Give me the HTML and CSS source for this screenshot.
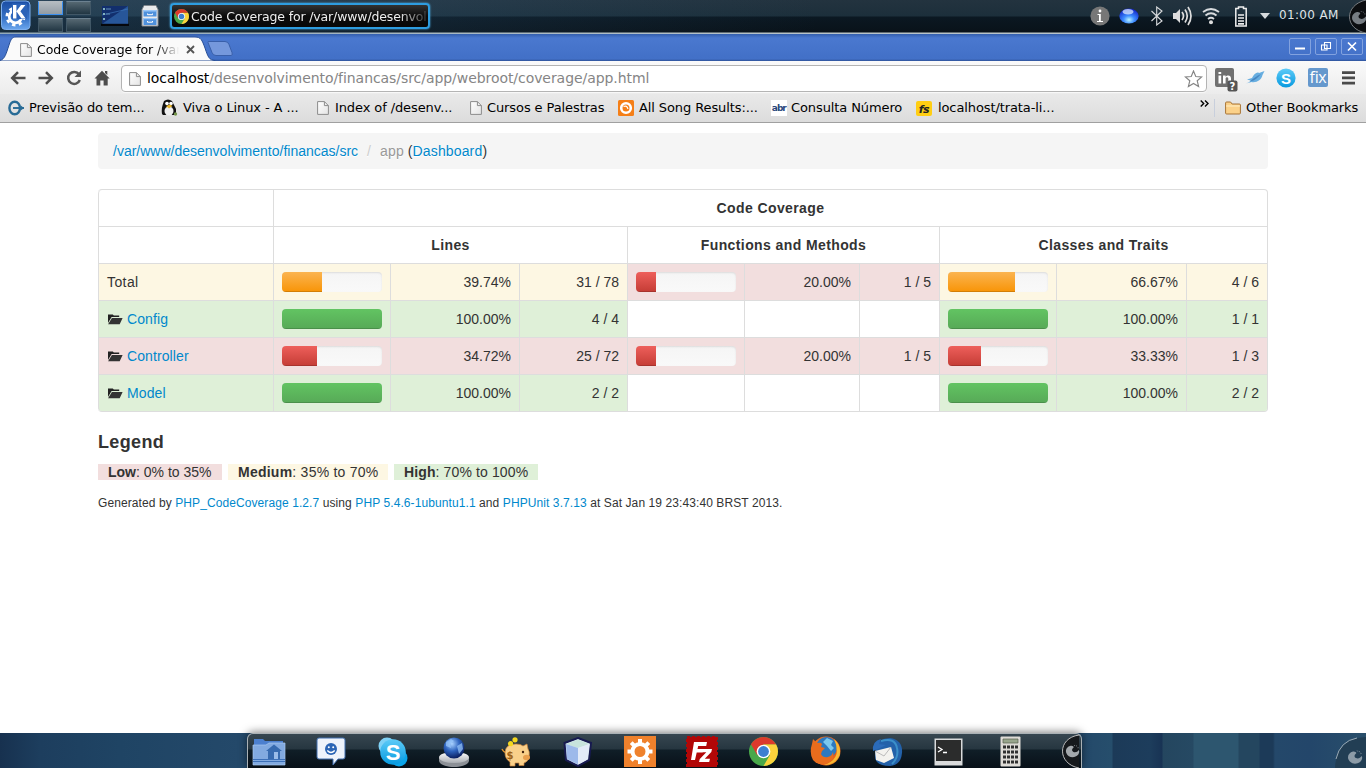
FILE: index.html
```html
<!DOCTYPE html>
<html lang="en">
<head>
<meta charset="utf-8">
<title>Code Coverage for /var/www/desenvolvimento/financas/src/app</title>
<link rel="stylesheet" href="styles.css">
</head>
<body>
<svg width="0" height="0" class="defs" aria-hidden="true">
  <defs>
    <linearGradient id="kb" x1="0" y1="0" x2="0" y2="1"><stop offset="0" stop-color="#1b4da3"/><stop offset=".6" stop-color="#3672c6"/><stop offset="1" stop-color="#6aa6ee"/></linearGradient>
    <linearGradient id="silver" x1="0" y1="0" x2="0" y2="1"><stop offset="0" stop-color="#fff"/><stop offset="1" stop-color="#a9adb2"/></linearGradient>
    <radialGradient id="orb" cx=".5" cy=".75" r=".7"><stop offset="0" stop-color="#b9f4ff"/><stop offset=".4" stop-color="#3d8cff"/><stop offset="1" stop-color="#1226c8"/></radialGradient>
    <linearGradient id="doc" x1="0" y1="0" x2="1" y2="1"><stop offset="0" stop-color="#fff"/><stop offset="1" stop-color="#e4e4e4"/></linearGradient>
    <linearGradient id="sky" x1="0" y1="0" x2="0" y2="1"><stop offset="0" stop-color="#5ecbf8"/><stop offset="1" stop-color="#0699df"/></linearGradient>
    <radialGradient id="globe" cx=".4" cy=".3" r=".7"><stop offset="0" stop-color="#a9d2ff"/><stop offset=".5" stop-color="#2e64bf"/><stop offset="1" stop-color="#0a1f60"/></radialGradient>
    <linearGradient id="fox" x1="0" y1="0" x2="1" y2="1"><stop offset="0" stop-color="#ee7a25"/><stop offset=".7" stop-color="#e4561a"/><stop offset="1" stop-color="#f9b62a"/></linearGradient>
    <symbol id="page" viewBox="0 0 12 14"><path d="M.6.6h6.800l4 4v8.800H.6z" fill="url(#doc)" stroke="#8c8c8c"/><path d="M7.400.6v4h4" fill="none" stroke="#8c8c8c"/></symbol>
    <symbol id="chrome" viewBox="0 0 28 28">
      <circle cx="14" cy="14" r="14" fill="#49a84a"/>
      <path d="M14 7h12.100A14 14 0 0 1 14 28l6.100-10.500z" fill="#fbd33c"/><path d="M14 7h12.100A14 14 0 0 0 1.900 7L8 17.500z" fill="#dc3a2c"/>
      <circle cx="14" cy="14" r="6.600" fill="#fff"/><circle cx="14" cy="14" r="5.200" fill="#3d7fd0"/>
    </symbol>
    <symbol id="folder" viewBox="0 0 16 12"><path d="M1 10V1.400h4.800l1 1.200h5.400v1.500H4.600z" fill="#222"/><path d="M4.900 4.900H15.600L12.700 11.200H1.100z" fill="#333"/></symbol>
    <symbol id="cashew" viewBox="0 0 16 16"><path d="M6 2.500C2 3.500 0 7 1.500 10.500c2 5 9 5.500 12.500 1.500 1.500-2 1.500-4 .5-5-1 2-3.500 3-5.500 2s-2-3 0-4.500c1-1-1-2.500-3-2z" fill="currentColor"/><path d="m9.500 1.500 1.300.3-.5 1zM11.700 1.800l1.300.9-1 .6zM13.500 3.600l1.200.8-1 .8z" fill="currentColor"/></symbol>
  </defs>
</svg>

<header class="panel">
  <svg class="kmenu" width="32" height="32" viewBox="0 0 32 32"><rect x="1.500" y="1" width="28.500" height="28.500" rx="4" fill="url(#kb)" stroke="#7fb0ee"/><circle cx="15.500" cy="16.500" r="6.300" fill="none" stroke="#fff" stroke-width="2.800"/><circle cx="15.500" cy="16.500" r="8.700" fill="none" stroke="#fff" stroke-width="2.600" stroke-dasharray="3.400 3.430"/><path d="M12 3.500h15v15.500H12z" fill="#2c63b8"/><path d="M13 5h3.400v13.500H13zM16.400 11.200 21 5h4.400l-5 6.300 5.200 7.200h-4.200z" fill="#fff"/></svg>
  <div class="pager"><i class="on"></i><i></i><i></i><i></i></div>
  <svg class="desk" width="28" height="22" viewBox="0 0 28 22"><path d="M1 1h26v18H1z" fill="#122f6d"/><path d="M27 1v18H1z" fill="#326bb0" opacity=".65"/><path d="M1 10 27 4" stroke="#427dc2" opacity=".6"/><path d="M0 18.800h28V21H0z" fill="#05070c"/><path d="M2 3h2v2H2zM2 8h2v2H2zM2 13h2v2H2z" fill="#82b2bf"/><path d="M5 4h5M5 9h4" stroke="#6290b5"/></svg>
  <svg class="cabinet" width="18" height="22" viewBox="0 0 18 22"><path d="M3 .5h12l2 4v16.500H1V4.500z" fill="#e9eaec" stroke="#80868c"/><path d="M2.500 5h13v6.500h-13zM2.500 13h13v7h-13z" fill="#4f91dc"/><path d="M2.500 5h13v1.500h-13zM2.500 13h13v1.300h-13z" fill="#9ac7f7"/><path d="M6.500 8.500v1.200h5V8.500M6.500 16v1.200h5V16" stroke="#fff" fill="none"/></svg>
  <div class="task"><svg width="15" height="15"><use href="#chrome"/></svg><span>Code Coverage for /var/www/desenvol</span></div>
  <div class="tray">
    <svg width="20" height="20" viewBox="0 0 20 20"><circle cx="10" cy="10" r="9.600" fill="#777"/><path d="M7.500 8h3.300v7H13v1H7v-1h2V9H7.500z" fill="#fff"/><circle cx="10" cy="5" r="1.400" fill="#fff"/></svg>
    <svg width="20" height="16" viewBox="0 0 20 16"><ellipse cx="10" cy="8" rx="9.700" ry="7.600" fill="url(#orb)"/><ellipse cx="9" cy="3.800" rx="5.500" ry="2.800" fill="#dceaff" opacity=".75"/></svg>
    <svg width="14" height="20" viewBox="0 0 14 20"><path d="m1.500 5 10.500 10-5.300 4V1L12 5 1.500 15" fill="none" stroke="#d9dbdd" stroke-width="1.100"/></svg>
    <svg width="20" height="20" viewBox="0 0 20 20"><path d="M0 7h3l4-4v14l-4-4H0z" fill="#ddd"/><path d="M9 6q3 4 0 8M12 3.500q4.500 6.500 0 13M15 1q6 9 0 18" fill="none" stroke="#ddd" stroke-width="1.700"/></svg>
    <svg width="18" height="18" viewBox="0 0 18 18"><path d="M1 5q8-6 16 0M3.500 8.500q5.500-4.500 11 0M6 12q3-2.500 6 0" fill="none" stroke="#d8dbde" stroke-width="1.800"/><circle cx="9" cy="15.300" r="2" fill="#ddd"/></svg>
    <svg class="battery" width="14" height="21" viewBox="0 0 14 21"><path d="M4.500 2.500V1h5v1.500h2.700V20H1.800V2.500z" fill="none" stroke="#eee" stroke-width="1.500"/><path d="M4 9h6M4 12h6M4 15h6M4 17.800h6" stroke="#eee" stroke-width="1.700"/></svg>
    <svg class="arrow" width="10" height="6" viewBox="0 0 10 6"><path d="M0 0h10L5 6z" fill="#d6dadd"/></svg>
    <time>01:00 AM</time>
    <svg class="corner" width="19" height="33" viewBox="0 0 19 33"><path d="M19 0C-3 5-3 29 19 33" fill="#0b0d10" stroke="#797d81"/><svg x="4" y="9" width="16" height="17" color="#777d83"><use href="#cashew"/></svg></svg>
  </div>
</header>

<div class="titlebar">
  <svg class="tabshape" width="236" height="27" viewBox="0 0 236 27"><path d="M0 26.500C5 25 6 20 9 11 11 5 12 3 16 3H195C201 3 202 6 205 14 208 23 209 26 215 26.500V27H0z" fill="#fafafa" stroke="#294f96"/><path d="M208 8.500q-.5-1 1-1h16q3 0 4 3l3 8q1 3-1 3h-15q-3 0-4-3z" fill="#7598dc" stroke="#395fa9"/></svg>
  <div class="tab"><svg width="12" height="14"><use href="#page"/></svg><span>Code Coverage for /var</span><svg class="close" width="9" height="9" viewBox="0 0 9 9"><path d="m1 1 7 7M8 1 1 8" stroke="#555" stroke-width="1.900"/></svg></div>
  <div class="wins">
    <svg width="22" height="17" viewBox="0 0 20 15"><path d="M5 9.500h10" stroke="#fff" stroke-width="2"/></svg>
    <svg width="22" height="17" viewBox="0 0 20 15"><path d="M8.500 3.500h6v6h-6zM5.500 6h5.500v5H5.500z" fill="#4974c7" stroke="#fff" stroke-width="1.100"/></svg>
    <svg width="22" height="17" viewBox="0 0 20 15"><path d="m6 3.500 8 8M14 3.500l-8 8" stroke="#fff" stroke-width="1.700"/></svg>
  </div>
</div>

<div class="toolbar">
  <nav class="nav">
    <svg width="16" height="14" viewBox="0 0 16 14"><path d="M15.500 7H3M8 1.200 2.200 7 8 12.800" fill="none" stroke="#4d4d4d" stroke-width="2.500"/></svg>
    <svg width="16" height="14" viewBox="0 0 16 14"><path d="M.5 7H13M8 1.200 13.800 7 8 12.800" fill="none" stroke="#4d4d4d" stroke-width="2.500"/></svg>
    <svg width="16" height="16" viewBox="0 0 16 16"><path d="M13 4.300A6 6 0 1 0 13.800 10" fill="none" stroke="#555" stroke-width="2.500"/><path d="M15 .5V7H8.500z" fill="#555"/></svg>
    <svg width="16" height="16" viewBox="0 0 16 16"><path d="m8 .8 7.700 7.700h-2v7H9.600v-5H6.300v5H2.500v-7h-2zM11 1h2.300v4L11 3z" fill="#4d4d4d"/></svg>
  </nav>
  <div class="url"><svg width="12" height="14"><use href="#page"/></svg><span><b>localhost</b>/desenvolvimento/financas/src/app/webroot/coverage/app.html</span><svg class="star" width="19" height="18" viewBox="0 0 20 19"><path d="m10 1 2.400 5.800 6.200.5-4.700 4 1.500 6.200L10 14.200l-5.400 3.300 1.500-6.200-4.700-4 6.200-.5z" fill="#fff" stroke="#858585" stroke-width="1.200"/></svg></div>
  <svg class="linkedin" width="23" height="24" viewBox="0 0 23 24"><rect width="19" height="19" rx="2" fill="#707070"/><path d="M3.500 7.500h2.700v8H3.500zM3.500 4h2.700v2H3.500zM8 7.500h2.600v1.200C12 7 16 6.500 16 10.500v5h-2.700v-4.700c0-2-2.700-2-2.700 0v4.700H8z" fill="#fff"/><rect x="12.500" y="12.500" width="10" height="11" rx="2" fill="#555"/><text x="17.500" y="21.600" class="tiny">?</text></svg>
  <svg class="bird" width="19" height="15" viewBox="0 0 19 15"><path d="M0 13.500c3-1 4-2 4.500-3L1 9.500l5-1.500C8 4 11 1.500 13 3l5.500-2-2 4c-1 5-6 8-11 7z" fill="#68aee0"/><path d="M4 11.500c5-1 8-4 11-7.500l-3 1.500-6 4" fill="#4585c2"/></svg>
  <svg class="sk" width="20" height="20" viewBox="0 0 20 20"><circle cx="10" cy="10" r="9.600" fill="url(#sky)"/><text x="10" y="15.500" class="s-letter">S</text></svg>
  <div class="fix">fix</div>
  <svg class="menu" width="13" height="14" viewBox="0 0 13 14"><path d="M0 1.700h13M0 6.900h13M0 12.100h13" stroke="#4a4a4a" stroke-width="2.700"/></svg>
</div>

<div class="bookmarks">
  <a class="bm b1"><svg width="16" height="16" viewBox="0 0 16 16"><ellipse cx="6.700" cy="8" rx="5.300" ry="6.300" fill="none" stroke="#286b96" stroke-width="2.400"/><path d="M5 8h11" stroke="#286b96" stroke-width="1.900"/><path d="M12.800 5.500 16 8l-3.200 2.500z" fill="#286b96"/></svg><span>Previsão do tem...</span></a>
  <a class="bm b2"><svg width="17" height="17" viewBox="0 0 17 17"><path d="M1 15C0 9 2 5 3 2q4-3 8 0l4 8v6H2z" fill="#111"/><ellipse cx="8" cy="12" rx="4.500" ry="4.500" fill="#eee"/><circle cx="6" cy="4.500" r="1.800" fill="#fff"/><circle cx="10" cy="4.500" r="1.800" fill="#fff"/><path d="m5 7 4-1.500L11.500 7 8 9.500z" fill="#eab72e"/><circle cx="14.500" cy="15" r="1.700" fill="#74934a"/></svg><span>Viva o Linux - A ...</span></a>
  <a class="bm b3"><svg width="12" height="14"><use href="#page"/></svg><span>Index of /desenv...</span></a>
  <a class="bm b4"><svg width="12" height="14"><use href="#page"/></svg><span>Cursos e Palestras</span></a>
  <a class="bm b5"><svg width="16" height="16" viewBox="0 0 16 16"><rect width="16" height="16" rx="1.500" fill="#f57f17"/><circle cx="8" cy="8" r="4.800" fill="none" stroke="#fff" stroke-width="2.600"/><path d="M5.500 6.500Q9 5 10 9" stroke="#fff" fill="none" stroke-width="1.200"/></svg><span>All Song Results:...</span></a>
  <a class="bm b6"><svg width="16" height="16" viewBox="0 0 16 16"><path d="M0 0h16v16H0z" fill="#fff"/><text x="7.800" y="11" class="abr">abr</text></svg><span>Consulta Número</span></a>
  <a class="bm b7"><svg width="17" height="16" viewBox="0 0 17 16"><rect y="1" width="16" height="15" rx="2" fill="#ffce13"/><text x="8" y="13" class="fs">fs</text></svg><span>localhost/trata-li...</span></a>
  <svg class="more" width="9" height="7" viewBox="0 0 9 7"><path d="m.7.500 3 3-3 3M5 .5l3 3-3 3" fill="none" stroke="#000" stroke-width="1.400"/></svg>
  <a class="bm other"><svg width="16" height="14" viewBox="0 0 16 14"><path d="M.6 12V2q0-1 1-1h4l1.500 2h7.300q1 0 1 1v8q0 1-1 1H1.600q-1 0-1-1z" fill="#fbd189" stroke="#a77334"/><path d="M1 5h14" stroke="#fff0c8"/></svg><span>Other Bookmarks</span></a>
</div>

<main class="page">
  <div class="crumb"><a class="path">/var/www/desenvolvimento/financas/src</a><i>/</i><em>app</em> (<a>Dashboard</a>)</div>
  <table class="cov">
    <colgroup><col class="c0"><col class="c1"><col class="c2"><col class="c3"><col class="c1"><col class="c5"><col class="c6"><col class="c1"><col class="c8"><col></colgroup>
    <tr><th></th><th colspan="9">Code Coverage</th></tr>
    <tr><th></th><th colspan="3">Lines</th><th colspan="3">Functions and Methods</th><th colspan="3">Classes and Traits</th></tr>
    <tr class="med"><td>Total</td><td><div class="bar"><div style="width:39.74%"></div></div></td><td>39.74%</td><td>31 / 78</td><td class="low"><div class="bar"><div style="width:20%"></div></div></td><td class="low">20.00%</td><td class="low">1 / 5</td><td><div class="bar"><div style="width:66.67%"></div></div></td><td>66.67%</td><td>4 / 6</td></tr>
    <tr class="high"><td><svg width="16" height="12"><use href="#folder"/></svg><a>Config</a></td><td><div class="bar"><div style="width:100%"></div></div></td><td>100.00%</td><td>4 / 4</td><td class="none"></td><td class="none"></td><td class="none"></td><td><div class="bar"><div style="width:100%"></div></div></td><td>100.00%</td><td>1 / 1</td></tr>
    <tr class="low"><td><svg width="16" height="12"><use href="#folder"/></svg><a>Controller</a></td><td><div class="bar"><div style="width:34.72%"></div></div></td><td>34.72%</td><td>25 / 72</td><td><div class="bar"><div style="width:20%"></div></div></td><td>20.00%</td><td>1 / 5</td><td><div class="bar"><div style="width:33.33%"></div></div></td><td>33.33%</td><td>1 / 3</td></tr>
    <tr class="high"><td><svg width="16" height="12"><use href="#folder"/></svg><a>Model</a></td><td><div class="bar"><div style="width:100%"></div></div></td><td>100.00%</td><td>2 / 2</td><td class="none"></td><td class="none"></td><td class="none"></td><td><div class="bar"><div style="width:100%"></div></div></td><td>100.00%</td><td>2 / 2</td></tr>
  </table>
  <h4>Legend</h4>
  <div class="legend"><span class="low l1"><b>Low</b>: 0% to 35%</span><span class="med l2"><b>Medium</b>: 35% to 70%</span><span class="high l3"><b>High</b>: 70% to 100%</span></div>
  <p class="gen">Generated by <a>PHP_CodeCoverage 1.2.7</a> using <a>PHP 5.4.6-1ubuntu1.1</a> and <a>PHPUnit 3.7.13</a> at Sat Jan 19 23:43:40 BRST 2013.</p>
</main>

<footer class="desktop">
  <div class="dock">
    <svg width="34" height="30" viewBox="0 0 34 30"><path d="M2 2h9l2 2h18v22H2z" fill="#4c80cf"/><path d="M1 8h13l3-2h16v22H1z" fill="#82aae0" stroke="#a9c8ef" stroke-width=".7"/><path d="m14 14 8-6.500 8 6.500h-2v8H16v-8z" fill="#376bb0"/><path d="M22 15h4v7h-4z" fill="#9abce9"/><path d="M1 22.500h32M1 24.500h32" stroke="#3c70b8"/></svg>
    <svg width="30" height="30" viewBox="0 0 30 30"><path d="M3 1h24q2 0 2 2v17q0 2-2 2h-5l-5 6v-6H3q-2 0-2-2V3q0-2 2-2z" fill="#eef3fb" stroke="#416faf"/><circle cx="15" cy="12" r="6" fill="#2b65b5"/><circle cx="12.800" cy="10.300" r="1" fill="#fff"/><circle cx="17.200" cy="10.300" r="1" fill="#fff"/><path d="M11.300 13.500q3.700 4 7.400 0" stroke="#fff" stroke-width="1.300" fill="none"/></svg>
    <svg width="30" height="30" viewBox="0 0 30 30"><circle cx="9" cy="9" r="8.500" fill="#7fd1f6"/><circle cx="21" cy="21" r="8.500" fill="#0aa5ea"/><circle cx="15" cy="15" r="12.800" fill="url(#sky)"/><text x="15" y="23" class="s-big">S</text></svg>
    <svg width="32" height="30" viewBox="0 0 32 30"><path d="M1 21v3c2 8 28 8 30 0v-3z" fill="#8c9096"/><ellipse cx="16" cy="20.500" rx="15" ry="5.500" fill="url(#silver)"/><circle cx="16" cy="11" r="10.500" fill="url(#globe)"/><path d="m8 5 5-3 3 2-4 3 1 4-5-2zM19 9l5-3 1 6-4 5z" fill="#9ac9fc" opacity=".7"/></svg>
    <svg width="30" height="30" viewBox="0 0 30 30"><path d="M1 12q2 4 5 3" stroke="#d99130" fill="none" stroke-width="1.500"/><path d="M4 16q0-9 11-9 5 0 7 2l4-2 1 5q2 2 1 8-1 5-5 6v2.500h-5V26h-4v3H9v-4q-5-3-5-9z" fill="#f9d08a" stroke="#c9833a" stroke-width=".7"/><ellipse cx="25.500" cy="20.500" rx="3.500" ry="2.700" fill="#e89f4d"/><circle cx="14" cy="2.800" r="2.600" fill="#f5d71f"/><circle cx="9.500" cy="6.700" r="2.600" fill="#f5d71f"/><circle cx="22" cy="15" r="1.200" fill="#42210b"/><text x="9" y="22" class="dollar">$</text></svg>
    <svg width="30" height="30" viewBox="0 0 30 30"><path d="m15 1 13 5-2 17-11 6L3 23 1.500 6z" fill="#dcecf6" stroke="#171a50" stroke-width="2"/><path d="m3 7 12 4 11.500-4L15 2.500z" fill="#c7e3dc"/><path d="m3 7 12 4v16.500L4 22z" fill="#9db9ea"/><path d="m15 11 11.500-4-2 15.500L15 27.500z" fill="#e3ebf8"/></svg>
    <svg width="32" height="31" viewBox="0 0 32 31"><path d="M0 0h32v31H0z" fill="#ef812c"/><circle cx="16" cy="15.500" r="7.500" fill="none" stroke="#fff" stroke-width="4"/><path d="M16 3v5M16 23v5M3.500 15.500h5M23.500 15.500h5M7.200 6.700l3.500 3.500M21.300 20.800l3.500 3.500M24.800 6.700l-3.500 3.500M10.700 20.800l-3.500 3.500" stroke="#fff" stroke-width="4"/></svg>
    <svg width="32" height="31" viewBox="0 0 32 31"><path d="M1 1h30v30H1z" fill="#b20707" stroke="#b20707" stroke-width="2" stroke-dasharray="3 2"/><path d="M8 6h13l-.8 4h-8l-.7 3h6l-.8 3.500h-6L9 24H5zM16.500 13H26l-.7 3-6.500 6.800H24l-.8 3.200H13l.8-3 6.500-6.800H16z" fill="#fff"/></svg>
    <svg width="29" height="29"><use href="#chrome"/></svg>
    <svg width="31" height="31" viewBox="0 0 31 31"><circle cx="16" cy="15" r="14.500" fill="url(#fox)"/><circle cx="16.500" cy="11.500" r="10.500" fill="#2d79bf"/><path d="m17 2 6 3-2 4 3 3-3 3-4-5-4-4z" fill="#7bc8ed"/><path d="M24 3q8 7 5.500 16.500-5 10-16 9.500 11-3 13-11 1-8-2.500-15z" fill="#f9ba32"/><path d="M2 8 3 3l4 4q4-1 5 1l-1 3 4 1-3 3-1 3q2 4 7 3 4-1 5-5 2 8-5 11-9 4-15-3-4-7-1-16z" fill="#e86c1d"/></svg>
    <svg width="31" height="30" viewBox="0 0 31 30"><path d="M4 11Q6 1 18 1q13 2 12 15-1 12-12 13Q3 29 3 19z" fill="#2361a9"/><path d="M9 4q14-4 16 7 2 9-5 16" fill="none" stroke="#3b8fc9" stroke-width="2"/><path d="m3 14 16-4 3 11-10 5-8-3z" fill="#f3f2ee"/><path d="m3 14 9 5 7-9" fill="none" stroke="#bbb"/><path d="M1 14Q0 4 9 2l-2 5 7 1-8 4z" fill="#2b6bb9"/></svg>
    <svg width="29" height="28" viewBox="0 0 29 28"><path d="M.5.500h28v27H.5z" fill="#d9dadb"/><path d="M2 2h25v21H2z" fill="#2b2c2c"/><path d="m4 9 4 2.500L4 14M9 14.500h4" stroke="#fff" fill="none" stroke-width="1.300"/></svg>
    <svg width="21" height="31" viewBox="0 0 21 31"><rect x=".5" y=".5" width="20" height="30" rx="1" fill="#dedbd6"/><path d="M3 3h15v4H3z" fill="#98a58c" stroke="#56604e" stroke-width=".7"/><path d="M3 11h15M3 16h15M3 21h15M3 26h15" stroke="#303030" stroke-width="3" stroke-dasharray="3 1"/></svg>
    <svg class="endcap" width="20" height="34" viewBox="0 0 20 34"><path d="M18 1C-4 4-4 30 18 34" fill="#16191c" stroke="#bbb"/><svg x="4" y="9" width="15" height="16" color="#a4a9ad"><use href="#cashew"/></svg></svg>
  </div>
  <svg class="hotcorner" width="31" height="31" viewBox="0 0 31 31"><path d="M31 0Q1 1 0 31h31z" fill="#223e54"/><path d="M1 22Q5 4 22 1" fill="none" stroke="#9aaab5"/><svg x="12" y="12" width="16" height="16" color="#8c9ba7"><use href="#cashew"/></svg></svg>
</footer>
</body>
</html>
```

FILE: styles.css
```css
* { box-sizing: border-box; }
body { margin: 0; width: 1366px; height: 768px; overflow: hidden; display: flex; flex-direction: column; background: #fff; font: 13px "DejaVu Sans", sans-serif; color: #000; }
svg { display: block; flex: none; }
.defs { position: absolute; }

.panel { height: 34px; flex: none; display: flex; align-items: flex-start; background: linear-gradient(90deg, rgba(60,110,150,.3), transparent 60%), linear-gradient(#23333f 0, #1c2f3b 16px, #0b1822 17px, #091219 32px, #b9c4c9 33px, #b9c4c9 34px); }
.pager { display: grid; grid-template-columns: 25px 25px; gap: 3px; margin: 1px 0 0 6px; }
.pager i { height: 14px; background: linear-gradient(#566872, #213643); border: 1px solid #415766; border-top-color: #6c8190; }
.pager .on { background: linear-gradient(#b5bcc1, #929ca4); border: 1px solid #3a8ff0; border-top-color: #b5bcc1; }
.desk { margin: 5px 0 0 10px; }
.cabinet { margin: 5px 0 0 12px; }
.task { margin: 3px 0 0 11px; width: 260px; height: 26px; border: 2px solid #2e9de0; border-radius: 4px; background: linear-gradient(#333, #0c0c0c 50%, #080808); color: #eee; display: flex; align-items: center; gap: 2px; padding-left: 2px; box-shadow: 0 0 2px #57c1ff; }
.task span { white-space: nowrap; width: 236px; font-size: 12.500px; letter-spacing: -.15px; -webkit-mask: linear-gradient(90deg, #000 88%, transparent 102%); mask: linear-gradient(90deg, #000 88%, transparent 102%); }
.tray { margin-left: auto; display: flex; align-items: center; height: 32px; color: #dfe3e6; }
.tray svg + svg { margin-left: 9px; }
.tray svg:nth-child(3) { margin-left: 11px; }
.tray .battery { margin-left: 14px; }
.tray .arrow { margin-left: 12px; }
.tray time { margin: -2px 7px 0 9px; width: 61px; font-size: 12px; letter-spacing: .35px; white-space: nowrap; }

.titlebar { position: relative; height: 27px; flex: none; background: linear-gradient(#335ead 0, #4a78cf 4px, #4270c7 25px, #2d5299 27px); display: flex; justify-content: space-between; }
.tabshape { position: absolute; left: 0; top: 0; }
.tab { position: relative; display: flex; align-items: center; padding: 4px 0 0 20px; height: 27px; }
.tab span { margin-left: 5px; width: 145px; white-space: nowrap; font-size: 12.500px; letter-spacing: -.05px; -webkit-mask: linear-gradient(90deg, #000 82%, transparent 98%); mask: linear-gradient(90deg, #000 82%, transparent 98%); }
.tab .close { margin-left: 4px; }
.wins { display: flex; gap: 4px; padding: 4px 3px 0 0; }
.wins svg { border: 1px solid #82a2df; border-radius: 2px; }

.toolbar { height: 33px; flex: none; display: flex; align-items: center; background: linear-gradient(#fafafa, #ececec); }
.nav { display: flex; align-items: center; gap: 12px; padding-left: 10px; width: 121px; flex: none; }
.url { width: 1086px; height: 27px; margin-top: 2px; border: 1px solid #b4b4b4; border-radius: 4px; background: #fff; display: flex; align-items: center; padding: 0 3px 0 7px; color: #858585; font-size: 14px; box-shadow: 0 1px 0 #f8f8f8; }
.url span { margin: -1px 0 0 6px; letter-spacing: -.06px; }
.url b { font-weight: 400; color: #000; }
.url .star { margin-left: auto; }
.linkedin { margin: 5px 0 0 8px; }
.bird { margin-left: 8px; }
.sk { margin-left: 11px; }
.fix { margin-left: 12px; width: 20px; height: 19px; border-radius: 2px; background: #6598cd; color: #fff; font: 16px/18px "Open Sans", sans-serif; text-align: center; letter-spacing: -.3px; }
.menu { margin-left: 14px; }
.tiny { font: bold 10px "DejaVu Sans"; fill: #fff; text-anchor: middle; }
.s-letter { font: bold 15px "Liberation Sans"; fill: #fff; text-anchor: middle; }
.s-big { font: bold 22px "Liberation Sans"; fill: #fff; text-anchor: middle; }
.abr { font: bold 9px "DejaVu Sans"; fill: #29477c; text-anchor: middle; letter-spacing: -1px; }
.fs { font: italic bold 11px "DejaVu Sans"; fill: #222; text-anchor: middle; letter-spacing: -.5px; }
.dollar { font: bold 10px "DejaVu Sans"; fill: #9d6217; text-anchor: middle; }

.bookmarks { height: 29px; flex: none; display: flex; align-items: center; padding: 0 8px 1px; background: linear-gradient(#e9e9e9, #dcdcdc); border-bottom: 1px solid #a0a0a0; }
.bm { display: flex; align-items: center; flex: none; gap: 5px; white-space: nowrap; letter-spacing: -.1px; }
.b1 { width: 153px; } .b2 { width: 156px; } .b3 { width: 153px; gap: 6px; } .b4 { width: 148px; gap: 5px; }
.b5 { width: 153px; } .b6 { width: 145px; gap: 4px; } .b7 { width: 150px; }
.more { margin: -9px 0 0 134px; }
.other { margin-left: 5px; border-left: 1px solid #c8cfdc; padding-left: 10px; height: 18px; }

.page { flex: 1; padding: 10px 98px 0; background: #fff; font: 14px/20px "Liberation Sans", Arial, sans-serif; color: #333; min-height: 0; }
.page a { color: #08c; text-decoration: none; }
.crumb { height: 36px; padding: 8px 15px; border-radius: 4px; background: #f5f5f5; text-shadow: 0 1px 0 #fff; white-space: nowrap; }
.crumb i { font-style: normal; color: #ccc; margin: 0 9px; }
.crumb em { font-style: normal; color: #999; letter-spacing: .2px; }
.crumb em + a { letter-spacing: .15px; }
.cov { margin-top: 20px; width: 1170px; table-layout: fixed; border-collapse: separate; border-spacing: 0; border: 1px solid #ddd; border-left: 0; border-radius: 4px; overflow: hidden; }
.c0 { width: 175px; } .c1 { width: 117px; } .c2 { width: 129px; } .c3 { width: 108px; } .c5 { width: 115px; } .c6 { width: 80px; } .c8 { width: 130px; }
.cov th, .cov td { height: 37px; padding: 8px; border-left: 1px solid #ddd; border-top: 1px solid #ddd; text-align: right; line-height: 20px; white-space: nowrap; }
.cov tr:first-child th { height: 36px; border-top: 0; }
.cov th { text-align: center; letter-spacing: .4px; }
.cov th:first-child { border-top-left-radius: 4px; }
.cov tr:nth-child(2) th:first-child { border-top-left-radius: 0; }
.cov tr:last-child td:first-child { border-bottom-left-radius: 4px; }
.cov td:first-child { text-align: left; letter-spacing: .1px; }
.cov tr.med td:first-child { letter-spacing: .4px; }
.cov td svg { display: inline-block; vertical-align: -1px; margin-right: 4px; }
.low, .low td { background: #f2dede; }
.med, .med td { background: #fdf7e3; }
.high, .high td { background: #dff0d8; }
.med td.low { background: #f2dede; }
.high td.none { background: #fff; }
.bar { width: 100px; height: 20px; border-radius: 4px; overflow: hidden; background: linear-gradient(#f5f5f5, #f9f9f9); box-shadow: inset 0 1px 2px rgba(0,0,0,.1); }
.bar div { height: 20px; box-shadow: inset 0 -1px 0 rgba(0,0,0,.15); }
.med .bar div { background: linear-gradient(#fbb450, #f89406); }
.high .bar div { background: linear-gradient(#62c462, #57a957); }
.low .bar div, .med .low .bar div { background: linear-gradient(#ee5f5b, #c43c35); }
.page h4 { margin: 20px 0 10px; font-size: 18px; line-height: 20px; letter-spacing: .35px; }
.legend { display: flex; gap: 6px; height: 20px; align-items: center; }
.legend span { height: 16px; line-height: 17px; padding-left: 10px; white-space: nowrap; }
.l1 { width: 124px; } .l2 { width: 160px; letter-spacing: .24px; } .l3 { width: 144px; letter-spacing: .12px; }
.gen { margin: 11px 0 0; font-size: 12px; line-height: 20px; letter-spacing: .09px; }

.desktop { position: relative; height: 35px; flex: none; background: linear-gradient(90deg, #17314f 0, #1d3e5e 40px, #1f4464 120px, #24496a 240px, #24496a 1080px, #264e6c 1112px, #1c3a58 1113px, #1d3d5c 1150px, #183354 1162px, #24465f 1163px, #264963 1193px, #2d566f 1194px, #2d566f 1238px, #24465f 1239px, #24465f 1259px, #1c3a58 1260px, #1c3a58 1273px, #24486a 1275px, #23466a 1310px, #294f6b 1366px); }
.dock { width: 835px; height: 35px; margin-left: 247px; display: grid; grid-template-columns: 42px repeat(12, 61.800px) 1fr; align-items: center; justify-items: center; background: linear-gradient(#374650 0, #263640 15px, #101e27 16px, #081018); border: 1px solid #aab1b5; border-bottom: 0; border-radius: 6px 6px 0 0; box-shadow: 0 -1px 8px rgba(0,0,0,.5); }
.dock svg { margin-top: 1px; }
.dock svg:nth-child(n+2):not(.endcap) { margin-left: 20px; }
.dock .endcap { margin: 0; justify-self: end; }
.hotcorner { position: absolute; right: 0; bottom: 0; }
```
